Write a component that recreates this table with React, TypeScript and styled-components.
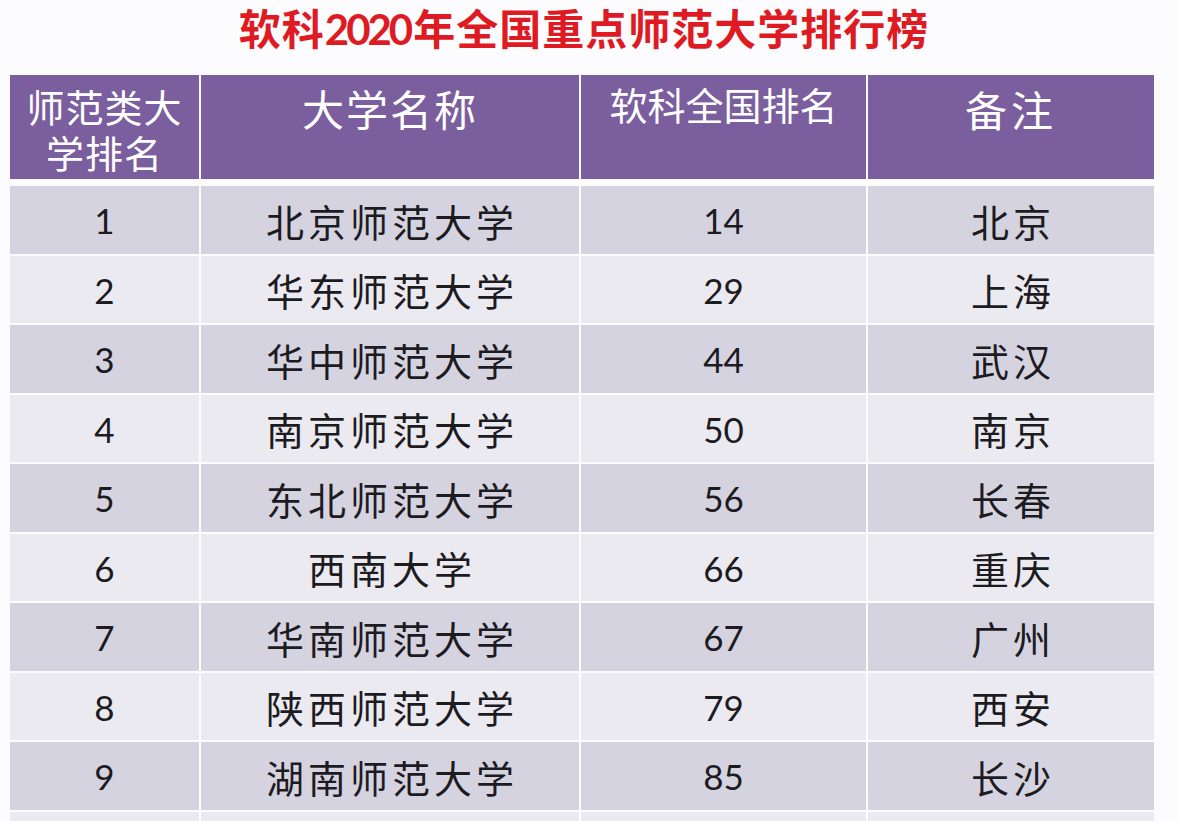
import React from "react";
import styled, { createGlobalStyle } from "styled-components";

const GlobalStyle = createGlobalStyle`
  html, body {
    margin: 0;
    padding: 0;
    background: #fcfcfe;
    overflow: hidden;
  }
  body {
    font-family: "Lato", "Noto Sans CJK SC", sans-serif;
  }
`;

const COLS = "189px 378px 285px 286px";

const Page = styled.div`
  width: 1178px;
  height: 821px;
  overflow: hidden;
  padding: 0 0 0 10px;
  box-sizing: border-box;
  background: #fcfcfe;
`;

const Title = styled.h1`
  margin: 0 0 19px 0;
  width: 1144px;
  text-align: center;
  font-family: "Noto Sans CJK SC", sans-serif;
  font-weight: 700;
  font-size: 42px;
  line-height: 54px;
  letter-spacing: 1px;
  color: #de1b23;
  padding-left: 2px;
`;

const Digits = styled.span`
  font-family: "Lato", sans-serif;
  font-weight: 700;
  letter-spacing: -3px;
  margin-right: 3px;
`;

const Table = styled.div`
  display: flex;
  flex-direction: column;
  gap: 2px;
  width: 1144px;
`;

const HeaderRow = styled.div`
  display: grid;
  grid-template-columns: ${COLS};
  column-gap: 2px;
  height: 104px;
  margin-bottom: 5px;
`;

const HeaderCell = styled.div<{ $size: number; $spacing: number; $pad: number }>`
  background: #7a5e9e;
  color: #ffffff;
  font-family: "Noto Sans CJK SC", sans-serif;
  font-weight: 400;
  font-size: ${(p) => p.$size}px;
  line-height: 46px;
  letter-spacing: ${(p) => p.$spacing}px;
  text-align: center;
  padding-top: ${(p) => p.$pad}px;
  box-sizing: border-box;
`;

const Row = styled.div<{ $alt: boolean }>`
  display: grid;
  grid-template-columns: ${COLS};
  column-gap: 2px;
  height: 67.5px;
  flex: none;
  & > div {
    background: ${(p) => (p.$alt ? "#eceaf1" : "#d6d3e0")};
  }
`;

const Cell = styled.div<{ $cjk?: boolean }>`
  display: flex;
  align-items: center;
  justify-content: center;
  color: #1c1b1f;
  font-family: ${(p) =>
    p.$cjk ? `"Noto Sans CJK SC", sans-serif` : `"Lato", "Noto Sans CJK SC", sans-serif`};
  font-weight: 400;
  font-size: ${(p) => (p.$cjk ? 38 : 35)}px;
  letter-spacing: ${(p) => (p.$cjk ? 4 : 0)}px;
  padding-left: ${(p) => (p.$cjk ? 4 : 0)}px;
  padding-top: 1px;
  box-sizing: border-box;
`;

const rows: [string, string, string, string][] = [
  ["1", "北京师范大学", "14", "北京"],
  ["2", "华东师范大学", "29", "上海"],
  ["3", "华中师范大学", "44", "武汉"],
  ["4", "南京师范大学", "50", "南京"],
  ["5", "东北师范大学", "56", "长春"],
  ["6", "西南大学", "66", "重庆"],
  ["7", "华南师范大学", "67", "广州"],
  ["8", "陕西师范大学", "79", "西安"],
  ["9", "湖南师范大学", "85", "长沙"],
  ["", "", "", ""],
];

export default function App() {
  return (
    <>
      <GlobalStyle />
      <Page>
        <Title>
          软科<Digits>2020</Digits>年全国重点师范大学排行榜
        </Title>
        <Table>
          <HeaderRow>
            <HeaderCell $size={38} $spacing={1} $pad={8}>
              师范类大
              <br />
              学排名
            </HeaderCell>
            <HeaderCell $size={42} $spacing={2} $pad={10}>
              大学名称
            </HeaderCell>
            <HeaderCell $size={38} $spacing={0} $pad={6}>
              软科全国排名
            </HeaderCell>
            <HeaderCell $size={42} $spacing={4} $pad={11}>
              备注
            </HeaderCell>
          </HeaderRow>
          {rows.map((r, i) => (
            <Row key={i} $alt={i % 2 === 1}>
              <Cell>{r[0]}</Cell>
              <Cell $cjk>{r[1]}</Cell>
              <Cell>{r[2]}</Cell>
              <Cell $cjk>{r[3]}</Cell>
            </Row>
          ))}
        </Table>
      </Page>
    </>
  );
}
